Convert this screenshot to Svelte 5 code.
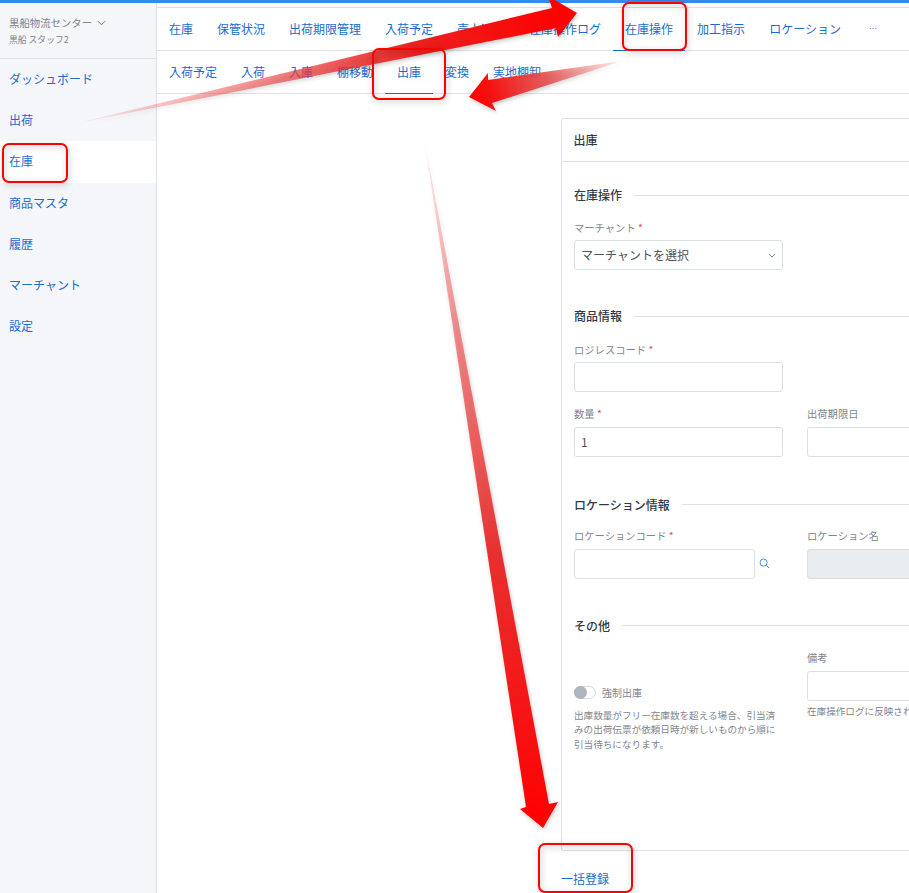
<script>
  const navItems = ['ダッシュボード', '出荷', '在庫', '商品マスタ', '履歴', 'マーチャント', '設定'];
  const tabs = ['在庫', '保管状況', '出荷期限管理', '入荷予定', '売上返品', '在庫操作ログ', '在庫操作', '加工指示', 'ロケーション', '…'];
  const subTabs = ['入荷予定', '入荷', '入庫', '棚移動', '出庫', '変換', '実地棚卸'];
  const marks = [
    { x: 3, y: 144, w: 64, h: 38 },
    { x: 373, y: 49, w: 72, h: 50 },
    { x: 623, y: 3, w: 63, h: 47 },
    { x: 539, y: 844, w: 93, h: 48 }
  ];
</script>

<div class="topbar"></div>
<div class="shell">
  <aside class="sidebar">
    <header class="org">
      <div class="org-name">
        黒船物流センター
        <svg class="chev" viewBox="0 0 10 6" width="9" height="6"><path d="M1 1l4 4 4-4" fill="none" stroke="#6f7780" stroke-width="1.1" /></svg>
      </div>
      <div class="org-user">黒船 スタッフ2</div>
    </header>
    <nav class="nav">
      {#each navItems as item}
        <a class="nav-item" class:active={item === '在庫'} href="#top">{item}</a>
      {/each}
    </nav>
  </aside>

  <main class="main">
    <div class="tabs">
      {#each tabs as t}
        <a class="tab" class:active={t === '在庫操作'} href="#top">{t}</a>
      {/each}
    </div>
    <div class="tabs sub">
      {#each subTabs as t}
        <a class="tab" class:active={t === '出庫'} href="#top">{t}</a>
      {/each}
    </div>

    <div class="content">
      <section class="card">
        <h2 class="card-title">出庫</h2>
        <div class="card-body">
          <div class="section first">
            <h3 class="section-title">在庫操作</h3>
            <div class="grid">
              <div class="field">
                <span class="label">マーチャント <i>*</i></span>
                <div class="input select">
                  マーチャントを選択
                  <svg viewBox="0 0 10 6" width="8" height="5"><path d="M1 1l4 4 4-4" fill="none" stroke="#5f6770" stroke-width="1.1" /></svg>
                </div>
              </div>
            </div>
          </div>

          <div class="section s2">
            <h3 class="section-title">商品情報</h3>
            <div class="grid">
              <div class="field">
                <span class="label">ロジレスコード <i>*</i></span>
                <div class="input"></div>
              </div>
              <div></div>
              <div class="field">
                <span class="label">数量 <i>*</i></span>
                <div class="input">1</div>
              </div>
              <div class="field">
                <span class="label">出荷期限日</span>
                <div class="input"></div>
              </div>
            </div>
          </div>

          <div class="section s3">
            <h3 class="section-title">ロケーション情報</h3>
            <div class="grid">
              <div class="field">
                <span class="label">ロケーションコード <i>*</i></span>
                <div class="with-icon">
                  <div class="input"></div>
                  <svg viewBox="0 0 12 12" width="11" height="11"><circle cx="5" cy="5" r="3.9" fill="none" stroke="#3b82d6" stroke-width="1" /><path d="M8 8l3 3" stroke="#3b82d6" stroke-width="1" /></svg>
                </div>
              </div>
              <div class="field">
                <span class="label">ロケーション名</span>
                <div class="input disabled"></div>
              </div>
            </div>
          </div>

          <div class="section s4">
            <h3 class="section-title">その他</h3>
            <div class="grid">
              <div class="toggle-col">
                <div class="toggle-row">
                  <span class="toggle"><span class="knob"></span></span>
                  <span class="toggle-label">強制出庫</span>
                </div>
                <p class="help">出庫数量がフリー在庫数を超える場合、引当済みの出荷伝票が依頼日時が新しいものから順に引当待ちになります。</p>
              </div>
              <div class="field">
                <span class="label">備考</span>
                <div class="input"></div>
                <span class="note">在庫操作ログに反映されます</span>
              </div>
            </div>
          </div>
        </div>
      </section>
      <a class="bulk" href="#top">一括登録</a>
    </div>
  </main>
</div>

<svg class="overlay" viewBox="0 0 909 893" width="909" height="893">
  <defs>
    <linearGradient id="g1" gradientUnits="userSpaceOnUse" x1="78" y1="123" x2="560" y2="10">
      <stop offset="0" stop-color="#f55" stop-opacity="0.1" />
      <stop offset="0.35" stop-color="#ee4444" stop-opacity="0.55" />
      <stop offset="0.7" stop-color="#ec1c1c" stop-opacity="0.98" />
      <stop offset="1" stop-color="#ff0000" />
    </linearGradient>
    <linearGradient id="g2" gradientUnits="userSpaceOnUse" x1="622" y1="61" x2="470" y2="97">
      <stop offset="0" stop-color="#f66" stop-opacity="0.1" />
      <stop offset="0.5" stop-color="#e64545" stop-opacity="0.85" />
      <stop offset="0.85" stop-color="#f51414" />
      <stop offset="1" stop-color="#ff0000" />
    </linearGradient>
    <linearGradient id="g3" gradientUnits="userSpaceOnUse" x1="424" y1="138" x2="543" y2="828">
      <stop offset="0" stop-color="#f66" stop-opacity="0.08" />
      <stop offset="0.3" stop-color="#f06060" stop-opacity="0.75" />
      <stop offset="0.6" stop-color="#e83030" />
      <stop offset="1" stop-color="#ff0000" />
    </linearGradient>
  </defs>
  <g class="shadowed">
    <polygon fill="url(#g1)" points="78,123 552,8 548,-4 577,13 558,37 556,28" />
    <polygon fill="url(#g2)" points="622,61 488,80 488,73 469,97 496,111 492,103" />
    <polygon fill="url(#g3)" points="424,138 526,807 520,809 543,828 558,802 549,804" />
  </g>
  {#each marks as m}
    <rect class="mark" x={m.x} y={m.y} width={m.w} height={m.h} rx="6" />
  {/each}
</svg>

<style>
  :global(body) {
    margin: 0;
    overflow: hidden;
    background: #fff;
    font-family: "Noto Sans CJK JP", Inter, sans-serif;
  }
  .topbar {
    height: 3px;
    background: #338af0;
  }
  .shell {
    display: flex;
    height: 890px;
    overflow: hidden;
  }
  .sidebar {
    flex: 0 0 156px;
    background: #f4f6fa;
    border-right: 1px solid #dde2e8;
  }
  .org {
    height: 56px;
    box-sizing: border-box;
    padding: 12px 9px 0;
    border-bottom: 1px solid #dfe3e8;
    color: #7c838b;
  }
  .org-name {
    font-size: 10.4px;
    line-height: 16px;
    display: flex;
    align-items: center;
    gap: 5px;
  }
  .org-user {
    font-size: 8.8px;
    line-height: 12px;
    margin-top: 3px;
  }
  .nav {
    display: flex;
    flex-direction: column;
  }
  .nav-item {
    height: 41.2px;
    line-height: 40px;
    padding-left: 9px;
    font-size: 12px;
    color: #1a6bd0;
    text-decoration: none;
  }
  .nav-item.active {
    background: #fff;
  }
  .main {
    flex: 1;
    min-width: 0;
    padding-top: 4px;
  }
  .tabs {
    display: flex;
    height: 42px;
    box-sizing: content-box;
    border-top: 1px solid #dee2e6;
    border-bottom: 0;
  }
  .tabs.sub {
    border-bottom: 1px solid #dee2e6;
  }
  .tab {
    padding: 0 12px;
    line-height: 42px;
    font-size: 12px;
    color: #1a6bd0;
    text-decoration: none;
    white-space: nowrap;
    box-sizing: border-box;
    height: 43px;
  }
  .tab.active {
    border-bottom: 1px solid #1a6bd0;
  }
  .tabs:not(.sub) .tab:last-child {
    padding: 0 14px 0 16px;
    font-size: 8px;
  }
  .content {
    padding: 24px 0 0 404px;
  }
  .card {
    width: 700px;
    height: 733px;
    box-sizing: border-box;
    border: 1px solid #dee2e6;
    border-radius: 2px 0 0 2px;
  }
  .card-title {
    margin: 0;
    height: 43px;
    line-height: 42px;
    padding-left: 11.5px;
    font-size: 12px;
    font-weight: 500;
    color: #2f3a45;
    border-bottom: 1px solid #dee2e6;
    box-sizing: border-box;
  }
  .card-body {
    padding: 0 12px;
  }
  .section-title {
    display: flex;
    align-items: center;
    gap: 12px;
    margin: 0;
    height: 18px;
    font-size: 12px;
    font-weight: 500;
    line-height: 18px;
    color: #2f3a45;
  }
  .section-title::after {
    content: "";
    flex: 1;
    height: 1px;
    background: #dee2e6;
  }
  .section.first { padding-top: 24px; }
  .s2 { margin-top: 37px; }
  .s3 { margin-top: 39px; }
  .s4 { margin-top: 38px; }
  .grid {
    display: grid;
    grid-template-columns: 209px 209px;
    column-gap: 24px;
    row-gap: 15px;
    margin-top: 16.5px;
    width: 700px;
  }
  .s2 .grid { margin-top: 17.5px; }
  .s3 .grid { margin-top: 15.5px; }
  .s4 .grid { margin-top: 16.5px; }
  .field {
    display: flex;
    flex-direction: column;
  }
  .label {
    font-size: 10.3px;
    line-height: 14px;
    margin-bottom: 5.5px;
    color: #7f868e;
    white-space: nowrap;
  }
  .label i {
    font-style: normal;
    color: #e8436a;
  }
  .input {
    box-sizing: border-box;
    height: 30px;
    width: 209px;
    border: 1px solid #dadfe4;
    border-radius: 3px;
    padding: 0 6px;
    font-size: 12px;
    line-height: 28px;
    color: #4c545c;
    background: #fff;
    flex-shrink: 0;
    white-space: nowrap;
  }
  .select {
    display: flex;
    align-items: center;
    justify-content: space-between;
  }
  .disabled {
    background: #e9ecef;
    width: 400px;
  }
  .field:last-child > .input:not(.select) {
    width: 400px;
  }
  .with-icon {
    display: flex;
    align-items: center;
    gap: 4px;
  }
  .with-icon .input {
    width: 181px;
  }
  .toggle-col {
    padding-top: 34px;
  }
  .toggle-row {
    display: flex;
    align-items: center;
    gap: 6px;
    height: 14px;
  }
  .toggle {
    display: block;
    width: 22px;
    height: 13px;
    box-sizing: border-box;
    border: 1px solid #d3d8dd;
    border-radius: 7px;
    position: relative;
  }
  .knob {
    position: absolute;
    left: -1px;
    top: -1px;
    width: 13px;
    height: 13px;
    border-radius: 50%;
    background: #adb5bd;
  }
  .toggle-label {
    font-size: 10px;
    color: #7f868e;
  }
  .help {
    margin: 9px 0 0;
    font-size: 9.6px;
    line-height: 14.4px;
    color: #7f868e;
  }
  .note {
    margin-top: 3px;
    font-size: 9.6px;
    line-height: 14px;
    color: #7f868e;
    white-space: nowrap;
  }
  .bulk {
    display: block;
    width: fit-content;
    margin: 19px 0 0;
    font-size: 12px;
    line-height: 18px;
    color: #1a6bd0;
    text-decoration: none;
  }
  .overlay {
    position: absolute;
    left: 0;
    top: 0;
    pointer-events: none;
  }
  .shadowed {
    filter: drop-shadow(1px 2px 2px rgba(0, 0, 0, 0.22));
  }
  .mark {
    fill: none;
    stroke: #f00;
    stroke-width: 2;
    filter: drop-shadow(1px 2px 3px rgba(0, 0, 0, 0.3));
  }
</style>
